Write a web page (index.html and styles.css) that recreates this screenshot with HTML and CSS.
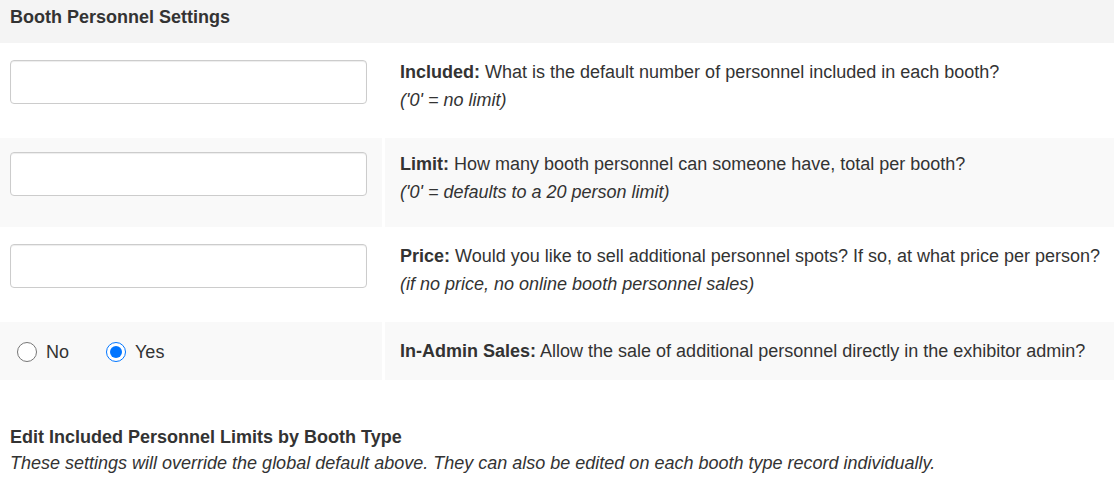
FILE: index.html
```html
<!DOCTYPE html>
<html>
    <head>
        <meta charset="utf-8">
        <title>Booth Personnel Settings</title>
        <link rel="stylesheet" href="styles.css">
    </head>
    <body>
        <div class="panel-title">Booth Personnel Settings</div>
        <div class="settings">
            <div class="row">
                <div class="cell-input"><input type="text" class="field" name="personnelIncluded"></div>
                <div class="cell-text">
                    <b>Included:</b> What is the default number of personnel included in each booth?<br>
                    <i>('0' = no limit)</i>
                </div>
            </div>
            <div class="row shaded">
                <div class="cell-input"><input type="text" class="field" name="personnelLimit"></div>
                <div class="cell-text">
                    <b>Limit:</b> How many booth personnel can someone have, total per booth?<br>
                    <i>('0' = defaults to a 20 person limit)</i>
                </div>
            </div>
            <div class="row">
                <div class="cell-input"><input type="text" class="field" name="personnelPrice"></div>
                <div class="cell-text">
                    <b>Price:</b> Would you like to sell additional personnel spots? If so, at what price per person?<br>
                    <i>(if no price, no online booth personnel sales)</i>
                </div>
            </div>
            <div class="row shaded short">
                <div class="cell-radio">
                    <label class="opt"><input type="radio" name="adminSales" value="0"> No</label>
                    <label class="opt"><input type="radio" name="adminSales" value="1" checked> Yes</label>
                </div>
                <div class="cell-text middle">
                    <b>In-Admin Sales:</b> Allow the sale of additional personnel directly in the exhibitor admin?
                </div>
            </div>
        </div>
        <div class="section">
            <div class="section-title">Edit Included Personnel Limits by Booth Type</div>
            <div class="section-note">These settings will override the global default above. They can also be edited on each booth type record individually.</div>
        </div>
    </body>
</html>
```
FILE: styles.css
```css
body {
    margin: 0;
    font-family: "Liberation Sans", Arial, sans-serif;
    font-size: 18px;
    color: #333;
    background: #fff;
}
.panel-title {
    height: 43px;
    box-sizing: border-box;
    padding: 7px 10px 0;
    font-weight: bold;
    background-color: #f4f4f4;
}
.settings {
    display: flex;
    flex-direction: column;
    gap: 3px;
    margin-top: 3px;
}
.row {
    display: grid;
    grid-template-columns: 382px 1fr;
    column-gap: 3px;
    height: 89px;
}
.row.short {
    height: 58px;
}
.shaded .cell-input,
.shaded .cell-radio,
.shaded .cell-text {
    background-color: #f9f9f9;
}
.cell-input {
    padding: 14px 15px 0 10px;
}
.field {
    display: block;
    width: 100%;
    height: 44px;
    box-sizing: border-box;
    border: 1px solid #ccc;
    border-radius: 4px;
    box-shadow: inset 0 1px 1px rgba(0,0,0,.075);
    font: inherit;
    padding: 6px 12px;
}
.cell-text {
    padding: 12px 0 0 15px;
    line-height: 28px;
    white-space: nowrap;
}
.cell-text.middle {
    padding-top: 15px;
}
.cell-radio {
    display: flex;
    align-items: center;
    padding: 2px 0 0 17px;
    gap: 37px;
}
.opt {
    display: flex;
    align-items: center;
    gap: 9px;
}
.opt input {
    width: 20px;
    height: 20px;
    margin: 0;
}
.section {
    padding: 44px 10px 0;
    line-height: 26px;
}
.section-title {
    font-weight: bold;
}
.section-note {
    font-style: italic;
}
```
